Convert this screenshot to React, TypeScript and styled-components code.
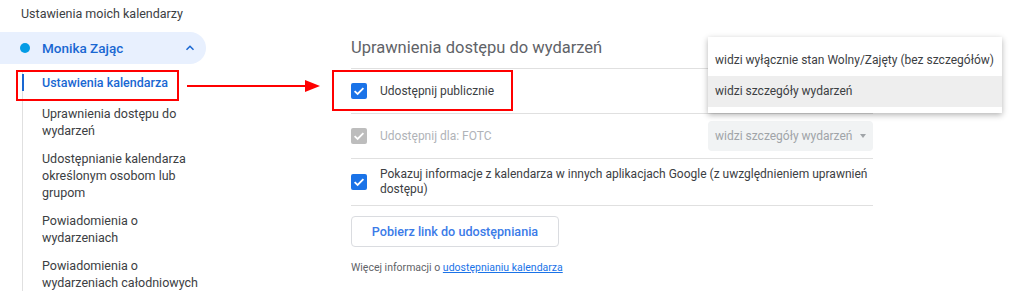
import styled, { createGlobalStyle } from "styled-components";

const GlobalStyle = createGlobalStyle`
    html, body {
        margin: 0;
        padding: 0;
        background: #fff;
        font-family: Roboto, "Noto Sans", Arial, sans-serif;
    }
`;

const subItems = [
    "Uprawnienia dostępu do wydarzeń",
    "Udostępnianie kalendarza określonym osobom lub grupom",
    "Powiadomienia o wydarzeniach",
    "Powiadomienia o wydarzeniach całodniowych",
];

function CheckIcon() {
    return (
        <svg width="16" height="16" viewBox="0 0 16 16">
            <path d="M3.6 8.2 L6.6 11 L12.4 5.2" fill="none" stroke="#fff" strokeWidth="1.8" />
        </svg>
    );
}

function App() {
    return (
        <Page>
            <GlobalStyle />
            <Sidebar>
                <SideTitle>Ustawienia moich kalendarzy</SideTitle>
                <CalendarPill>
                    <Dot />
                    <CalendarName>Monika Zając</CalendarName>
                    <svg width="14" height="14" viewBox="0 0 24 24">
                        <path d="M6 15 L12 9 L18 15" fill="none" stroke="#1967d2" strokeWidth="2.6" />
                    </svg>
                </CalendarPill>
                <SubList>
                    <SubItem $active>Ustawienia kalendarza</SubItem>
                    {subItems.map((item) => (
                        <SubItem key={item}>{item}</SubItem>
                    ))}
                </SubList>
            </Sidebar>

            <Main>
                <Heading>Uprawnienia dostępu do wydarzeń</Heading>
                <Row>
                    <Checkbox>
                        <CheckIcon />
                    </Checkbox>
                    <RowLabel>Udostępnij publicznie</RowLabel>
                </Row>
                <Row>
                    <Checkbox $disabled>
                        <CheckIcon />
                    </Checkbox>
                    <RowLabel $disabled>Udostępnij dla: FOTC</RowLabel>
                    <Select>
                        widzi szczegóły wydarzeń
                        <Caret />
                    </Select>
                </Row>
                <Row $tall>
                    <Checkbox>
                        <CheckIcon />
                    </Checkbox>
                    <RowLabel>
                        Pokazuj informacje z kalendarza w innych aplikacjach Google (z uwzględnieniem uprawnień
                        dostępu)
                    </RowLabel>
                </Row>
                <LinkButton>Pobierz link do udostępniania</LinkButton>
                <Info>
                    Więcej informacji o <a href="#">udostępnianiu kalendarza</a>
                </Info>
            </Main>

            <Menu>
                <MenuItem>widzi wyłącznie stan Wolny/Zajęty (bez szczegółów)</MenuItem>
                <MenuItem $selected>widzi szczegóły wydarzeń</MenuItem>
            </Menu>

            <Highlight style={{ left: 16, top: 70, width: 163, height: 31 }} />
            <Highlight style={{ left: 332, top: 70, width: 181, height: 41 }} />
            <Arrow>
                <ArrowLine />
                <ArrowHead />
            </Arrow>
        </Page>
    );
}

const Page = styled.div`
    position: relative;
    display: flex;
    width: 1024px;
    height: 297px;
    overflow: hidden;
`;

const Sidebar = styled.div`
    width: 206px;
    flex-shrink: 0;
`;

const SideTitle = styled.div`
    padding: 6px 0 0 21px;
    height: 26px;
    font-size: 12.5px;
    line-height: 16px;
    color: #3c4043;
`;

const CalendarPill = styled.div`
    display: flex;
    align-items: center;
    height: 32px;
    padding: 0 9px 0 20px;
    background: #e8f0fe;
    border-radius: 0 16px 16px 0;

    svg {
        margin-left: auto;
    }
`;

const Dot = styled.span`
    width: 10px;
    height: 10px;
    border-radius: 50%;
    background: #039be5;
    margin-right: 12px;
`;

const CalendarName = styled.span`
    font-size: 13.5px;
    font-weight: 500;
    color: #1967d2;
`;

const SubList = styled.div`
    margin: 8px 0 0 22px;
    border-left: 1px solid #e0e0e0;
    display: flex;
    flex-direction: column;
    gap: 11px;
    padding-top: 2px;
`;

const SubItem = styled.div<{ $active?: boolean }>`
    position: relative;
    padding-left: 19px;
    width: 160px;
    font-size: 12.5px;
    line-height: 17px;
    color: ${(p) => (p.$active ? "#1967d2" : "#3c4043")};
    font-weight: ${(p) => (p.$active ? 500 : 400)};
    margin-bottom: ${(p) => (p.$active ? "3px" : "0")};

    &::before {
        content: "";
        display: ${(p) => (p.$active ? "block" : "none")};
        position: absolute;
        left: -1px;
        top: 0;
        bottom: 0;
        width: 2px;
        background: #1967d2;
    }
`;

const Main = styled.div`
    margin-left: 145px;
    width: 522px;
    padding-top: 38px;
`;

const Heading = styled.div`
    font-size: 16.5px;
    line-height: 20px;
    color: #5f6368;
    padding-bottom: 10px;
    border-bottom: 1px solid #e0e0e0;
`;

const Row = styled.div<{ $tall?: boolean }>`
    display: flex;
    align-items: center;
    gap: 13px;
    height: ${(p) => (p.$tall ? "46px" : "44px")};
    border-bottom: 1px solid #e0e0e0;
`;

const Checkbox = styled.span<{ $disabled?: boolean }>`
    width: 16px;
    height: 16px;
    flex-shrink: 0;
    border-radius: 2px;
    background: ${(p) => (p.$disabled ? "#bdbdbd" : "#1a73e8")};
    display: flex;
`;

const RowLabel = styled.span<{ $disabled?: boolean }>`
    flex: 1;
    font-size: 12px;
    line-height: 15px;
    color: ${(p) => (p.$disabled ? "#b0b3b8" : "#3c4043")};
`;

const Select = styled.div`
    display: flex;
    align-items: center;
    width: 158px;
    height: 30px;
    padding-left: 7px;
    border-radius: 4px;
    background: #f1f3f4;
    font-size: 12px;
    color: #a0a4a8;
    white-space: nowrap;
`;

const Caret = styled.span`
    margin-left: 8px;
    border-left: 3.5px solid transparent;
    border-right: 3.5px solid transparent;
    border-top: 4px solid #a0a4a8;
`;

const LinkButton = styled.button`
    display: block;
    margin-top: 10px;
    width: 208px;
    height: 31px;
    border: 1px solid #dadce0;
    border-radius: 4px;
    background: #fff;
    font-family: inherit;
    font-size: 12.6px;
    font-weight: 500;
    color: #3b7be8;
`;

const Info = styled.div`
    margin-top: 14px;
    font-size: 10.5px;
    color: #5f6368;

    a {
        color: #1a73e8;
    }
`;

const Menu = styled.div`
    position: absolute;
    left: 708px;
    top: 37px;
    width: 294px;
    padding: 8px 0 6px;
    background: #fff;
    box-shadow: 0 2px 6px rgba(0, 0, 0, 0.3);
`;

const MenuItem = styled.div<{ $selected?: boolean }>`
    height: 31px;
    line-height: 31px;
    padding-left: 7px;
    font-size: 12px;
    color: #3c4043;
    white-space: nowrap;
    background: ${(p) => (p.$selected ? "#eeeeee" : "transparent")};
`;

const Highlight = styled.div`
    position: absolute;
    box-sizing: border-box;
    border: 2px solid #f00;
`;

const Arrow = styled.div`
    position: absolute;
    left: 187px;
    top: 80px;
    width: 133px;
    height: 12px;
    display: flex;
    align-items: center;
`;

const ArrowLine = styled.div`
    flex: 1;
    height: 2px;
    background: #f00;
`;

const ArrowHead = styled.div`
    border-top: 6px solid transparent;
    border-bottom: 6px solid transparent;
    border-left: 15px solid #f00;
`;

export default App;
